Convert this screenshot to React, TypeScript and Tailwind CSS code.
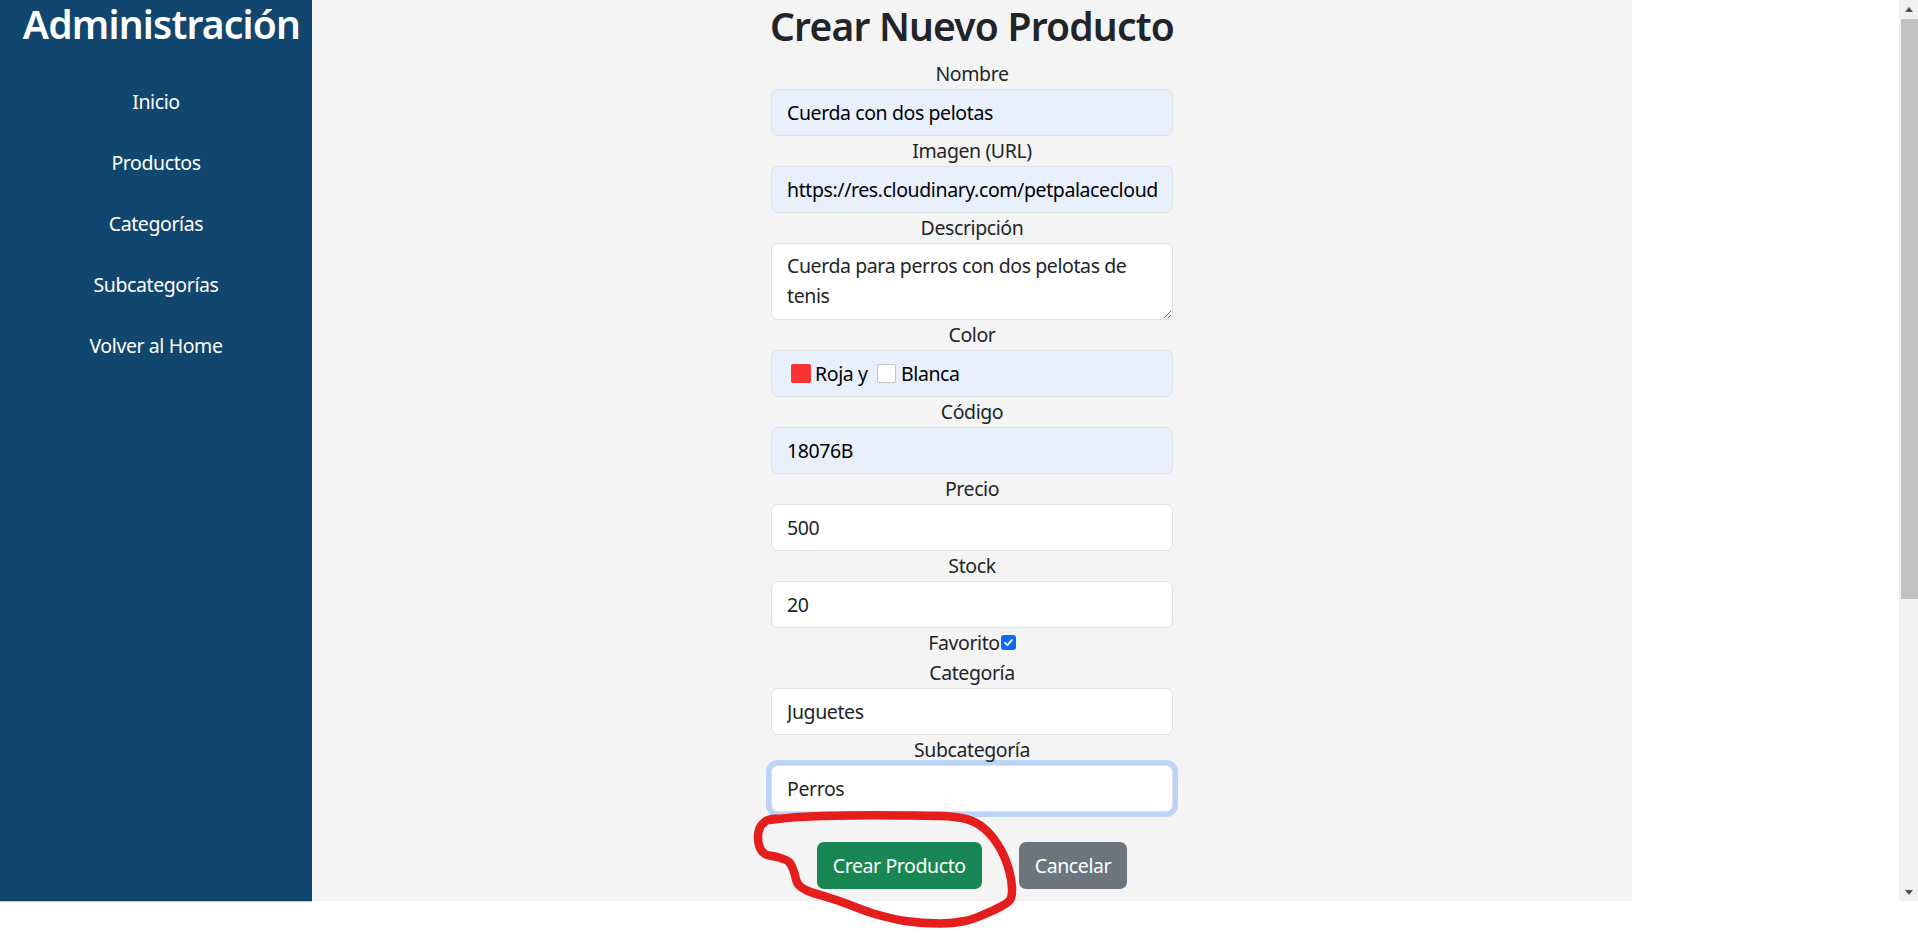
import React from 'react';

const navItems = ['Inicio', 'Productos', 'Categorías', 'Subcategorías', 'Volver al Home'];

// trazo a mano alrededor del botón (coordenadas de página)
const loop: [number, number][] = [
  [770, 820], [800, 817], [850, 815.5], [900, 815.5], [950, 816.5], [972, 821],
  [988, 832], [1001, 850], [1009, 870], [1012, 888], [1010, 900], [1000, 907],
  [985, 914], [965, 921], [940, 923.5], [905, 921], [875, 914], [850, 905],
  [830, 898], [808, 891], [798, 884], [794, 872], [789, 862], [777, 857],
  [765, 854], [759, 845], [759, 830], [766, 821], [776, 818.5],
];

const smoothPath = (pts: [number, number][]) => {
  let d = `M${pts[0][0]},${pts[0][1]}`;
  for (let i = 0; i < pts.length - 1; i++) {
    const p0 = pts[i - 1] || pts[i];
    const p1 = pts[i];
    const p2 = pts[i + 1];
    const p3 = pts[i + 2] || p2;
    const c1x = p1[0] + (p2[0] - p0[0]) / 6;
    const c1y = p1[1] + (p2[1] - p0[1]) / 6;
    const c2x = p2[0] - (p3[0] - p1[0]) / 6;
    const c2y = p2[1] - (p3[1] - p1[1]) / 6;
    d += ` C${c1x},${c1y} ${c2x},${c2y} ${p2[0]},${p2[1]}`;
  }
  return d;
};

const inputBase =
  'block w-full h-[47px] px-[15px] rounded-[7px] border border-[#dee2e6] leading-[30px] outline-none';

const Label: React.FC<{ children: React.ReactNode }> = ({ children }) => (
  <label className="block text-center h-[30px]">{children}</label>
);

const Field: React.FC<{ label: string; value: string; autofill?: boolean }> = ({ label, value, autofill }) => (
  <div>
    <Label>{label}</Label>
    <input
      readOnly
      value={value}
      className={`${inputBase} ${autofill ? 'bg-[#e8f0fe] text-black' : 'bg-white text-[#212529]'}`}
    />
  </div>
);

const App: React.FC = () => {
  return (
    <div className="relative h-[933px] overflow-hidden bg-white text-[#212529] font-['Segoe_UI','Noto_Sans',sans-serif] text-[19.5px] tracking-[-0.4px]">
      <div className="flex items-start">
        {/* Sidebar */}
        <aside className="w-[312px] h-[902px] shrink-0 bg-[#11466e] text-white border-b border-[#a9c8e3]">
          <h1 className="pl-[11px] text-center text-[39px] leading-[48px] tracking-[-0.8px] font-semibold">Administración</h1>
          <nav className="mt-[39px] flex flex-col items-center gap-[31px] leading-[30px]">
            {navItems.map((item) => (
              <a key={item} href="#" className="text-white">
                {item}
              </a>
            ))}
          </nav>
        </aside>

        {/* Contenido */}
        <main className="w-[1320px] h-[901px] shrink-0 bg-[#f4f4f4] flex flex-col items-center">
          <h2 className="mt-[2px] text-[39px] leading-[48px] tracking-[-0.8px] font-semibold">Crear Nuevo Producto</h2>

          <form className="mt-[9px] w-[402px] flex flex-col leading-[30px]">
            <Field label="Nombre" value="Cuerda con dos pelotas" autofill />
            <Field label="Imagen (URL)" value="https://res.cloudinary.com/petpalacecloud" autofill />

            <div>
              <Label>Descripción</Label>
              <textarea
                readOnly
                rows={2}
                value="Cuerda para perros con dos pelotas de tenis"
                className="block w-full h-[77px] px-[15px] py-[7px] rounded-[7px] border border-[#dee2e6] bg-white leading-[30px] outline-none"
              />
            </div>

            <div>
              <Label>Color</Label>
              <div className="flex items-center h-[47px] pl-[19px] rounded-[7px] border border-[#dee2e6] bg-[#e8f0fe] text-black">
                <span className="inline-block w-[19.5px] h-[19.5px] rounded-[2px] bg-[#fb3333]" />
                <span className="ml-[4.5px]">Roja y</span>
                <span className="ml-[9px] inline-block w-[19.5px] h-[19.5px] rounded-[2px] bg-white border border-[#c4c4c4]" />
                <span className="ml-[5px]">Blanca</span>
              </div>
            </div>

            <Field label="Código" value="18076B" autofill />
            <Field label="Precio" value="500" />
            <Field label="Stock" value="20" />

            <div className="flex items-center justify-center h-[30px]">
              <span>Favorito</span>
              <span className="ml-[1px] -mt-[2px] inline-flex items-center justify-center w-[15px] h-[15px] rounded-[3px] bg-[#0b6cf5]">
                <svg width="11" height="11" viewBox="0 0 12 12" fill="none">
                  <path d="M2.2 6.4 L4.8 8.9 L9.8 3.2" stroke="white" strokeWidth="2" strokeLinecap="round" strokeLinejoin="round" />
                </svg>
              </span>
            </div>

            <Field label="Categoría" value="Juguetes" />

            <div>
              <Label>Subcategoría</Label>
              <input
                readOnly
                value="Perros"
                className={`${inputBase} bg-white text-[#212529] border-[#86b7fe] shadow-[0_0_0_5px_rgba(13,110,253,0.25)]`}
              />
            </div>

            <div className="mt-[30px] flex justify-center gap-[37px]">
              <button type="button" className="h-[47px] px-[16px] rounded-[7px] bg-[#198754] text-white">
                Crear Producto
              </button>
              <button type="button" className="h-[47px] px-[16px] rounded-[7px] bg-[#6c757d] text-white">
                Cancelar
              </button>
            </div>
          </form>
        </main>

        <div className="flex-1" />

        {/* barra de desplazamiento */}
        <div className="w-[19px] h-[901px] shrink-0 bg-[#f1f1f1] flex flex-col items-end">
          <div className="w-full h-[19px] flex items-center justify-center">
            <span className="w-0 h-0 border-x-[4.5px] border-x-transparent border-b-[5px] border-b-[#505050]" />
          </div>
          <div className="w-[17px] h-[580px] bg-[#c1c1c1]" />
          <div className="flex-1" />
          <div className="w-full h-[12px] flex items-start justify-center pt-[1px]">
            <span className="w-0 h-0 border-x-[4.5px] border-x-transparent border-t-[5px] border-t-[#505050]" />
          </div>
        </div>
      </div>

      {/* anotación roja */}
      <svg className="pointer-events-none absolute left-0 top-0" width="1918" height="933">
        <path d={smoothPath(loop)} fill="none" stroke="#e41d1d" strokeWidth="8.5" strokeLinecap="round" strokeLinejoin="round" />
      </svg>
    </div>
  );
};

export default App;
